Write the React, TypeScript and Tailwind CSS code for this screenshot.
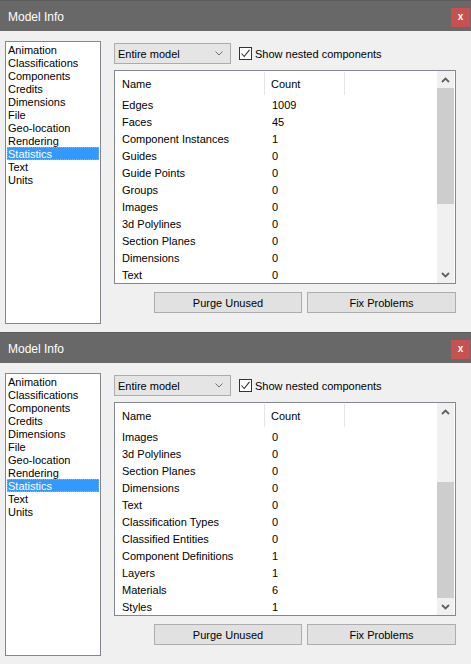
import React from "react";

const allRows: [string, string][] = [
  ["Edges", "1009"],
  ["Faces", "45"],
  ["Component Instances", "1"],
  ["Guides", "0"],
  ["Guide Points", "0"],
  ["Groups", "0"],
  ["Images", "0"],
  ["3d Polylines", "0"],
  ["Section Planes", "0"],
  ["Dimensions", "0"],
  ["Text", "0"],
  ["Classification Types", "0"],
  ["Classified Entities", "0"],
  ["Component Definitions", "1"],
  ["Layers", "1"],
  ["Materials", "6"],
  ["Styles", "1"],
];

const listItems = [
  "Animation",
  "Classifications",
  "Components",
  "Credits",
  "Dimensions",
  "File",
  "Geo-location",
  "Rendering",
  "Statistics",
  "Text",
  "Units",
];

function ArrowUp() {
  return (
    <svg width="9" height="6" viewBox="0 0 9 6">
      <path d="M1 5 L4.5 1.5 L8 5" fill="none" stroke="#606060" strokeWidth="1.8" />
    </svg>
  );
}

function ArrowDown() {
  return (
    <svg width="9" height="6" viewBox="0 0 9 6">
      <path d="M1 1 L4.5 4.5 L8 1" fill="none" stroke="#606060" strokeWidth="1.8" />
    </svg>
  );
}

function Window({ offset }: { offset: number }) {
  const rows = allRows.slice(offset, offset + 11);
  return (
    <div className="h-[332px] bg-[#f0f0f0] flex flex-col">
      <div className="h-[31px] bg-[#686868] border-t border-[#5c5c5c] flex items-center justify-between pl-[8px] pr-[1px]">
        <span className="text-white text-[12px] leading-none pt-[1px]">Model Info</span>
        <div className="w-[19px] h-[19px] bg-[#c75050] flex items-center justify-center mt-[2px]">
          <span className="text-white text-[10px] font-bold leading-none">x</span>
        </div>
      </div>
      <div className="flex pl-[5px] pt-[10px]">
        <div className="w-[96px] h-[283px] bg-white border border-[#828790] pt-[1px] px-[1px]">
          {listItems.map((it) => (
            <div
              key={it}
              className={
                it === "Statistics"
                  ? "h-[13px] leading-[15px] pl-[1px] bg-[#3399ff] text-white outline outline-1 outline-dotted outline-[#e0a050] -outline-offset-1"
                  : "h-[13px] leading-[15px] pl-[1px] text-black"
              }
            >
              {it}
            </div>
          ))}
        </div>
        <div className="ml-[13px] w-[342px] flex flex-col">
          <div className="mt-[2px] h-[21px] flex items-center">
            <div className="w-[117px] h-[21px] bg-[#e5e5e5] border border-[#acacac] flex items-center justify-between pl-[3px] pr-[7px]">
              <span className="text-black pt-[2px]">Entire model</span>
              <svg width="8" height="5" viewBox="0 0 8 5">
                <path d="M0.5 0.5 L4 4 L7.5 0.5" fill="none" stroke="#707070" strokeWidth="1" />
              </svg>
            </div>
            <div className="ml-[8px] w-[13px] h-[13px] bg-white border border-[#333333] flex items-center justify-center">
              <svg width="11" height="11" viewBox="0 0 11 11">
                <path d="M1.5 5.5 L4.2 8.5 L9.5 1.8" fill="none" stroke="#333333" strokeWidth="1.1" />
              </svg>
            </div>
            <span className="ml-[3px] text-black pt-[2px]">Show nested components</span>
          </div>
          <div className="mt-[6px] h-[214px] bg-white border border-[#828790] flex">
            <div className="flex-1 flex flex-col">
              <div className="h-[25px] flex items-center">
                <div className="w-[150px] h-[23px] border-r border-[#e5e5e5] flex items-center pl-[7px] pt-[2px] text-black">Name</div>
                <div className="w-[80px] h-[23px] border-r border-[#e5e5e5] flex items-center pl-[6px] pt-[2px] text-black">Count</div>
              </div>
              {rows.map(([n, c]) => (
                <div key={n} className="h-[17px] flex items-center pt-[2px] text-black">
                  <div className="w-[150px] pl-[7px]">{n}</div>
                  <div className="pl-[7px]">{c}</div>
                </div>
              ))}
            </div>
            <div className="w-[17px] mr-[1px] bg-[#f0f0f0] flex flex-col">
              <div className="h-[17px] flex items-center justify-center">
                <ArrowUp />
              </div>
              <div className="flex-1 flex flex-col">
                {offset === 0 ? (
                  <div className="h-[116px] bg-[#cdcdcd]" />
                ) : (
                  <div className="h-[116px] bg-[#cdcdcd] mt-auto" />
                )}
              </div>
              <div className="h-[17px] flex items-center justify-center">
                <ArrowDown />
              </div>
            </div>
          </div>
          <div className="mt-[8px] flex justify-end gap-[5px]">
            <div className="w-[148px] h-[21px] bg-[#e1e1e1] border border-[#adadad] flex items-center justify-center pt-[2px] text-black">
              Purge Unused
            </div>
            <div className="w-[149px] h-[21px] bg-[#e1e1e1] border border-[#adadad] flex items-center justify-center pt-[2px] text-black">
              Fix Problems
            </div>
          </div>
        </div>
      </div>
    </div>
  );
}

export default function App() {
  return (
    <div
      className="w-[471px] h-[664px] bg-[#f0f0f0] overflow-hidden text-[11px] leading-none"
      style={{ fontFamily: '"Liberation Sans", Arial, sans-serif' }}
    >
      <Window offset={0} />
      <Window offset={6} />
    </div>
  );
}
